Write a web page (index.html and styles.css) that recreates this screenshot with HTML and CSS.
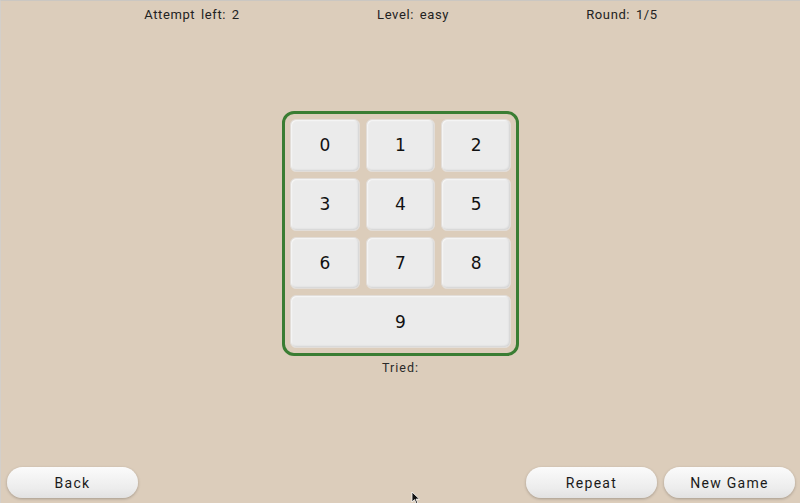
FILE: index.html
```html
<!DOCTYPE html>
<html>
<head>
<meta charset="utf-8">
<link rel="stylesheet" href="styles.css">
</head>
<body>
<div class="app">
  <header class="status">
    <span>Attempt left: 2</span>
    <span>Level: easy</span>
    <span>Round: 1/5</span>
  </header>
  <main class="board">
    <div class="keypad">
      <button class="key">0</button>
      <button class="key">1</button>
      <button class="key">2</button>
      <button class="key">3</button>
      <button class="key">4</button>
      <button class="key">5</button>
      <button class="key">6</button>
      <button class="key">7</button>
      <button class="key">8</button>
      <button class="key key-wide">9</button>
    </div>
    <div class="tried">Tried:</div>
  </main>
  <footer class="actions">
    <button class="pill">Back</button>
    <div class="right">
      <button class="pill">Repeat</button>
      <button class="pill">New Game</button>
    </div>
  </footer>
  <svg class="cursor" width="10" height="14" viewBox="0 0 10 14"><path d="M1 1 L1 11 L3.5 8.6 L5.3 12.6 L6.8 12 L5 8.1 L8.4 8.1 Z" fill="#111" stroke="#fff" stroke-width="0.8"/></svg>
</div>
</body>
</html>
```
FILE: styles.css
```css
* { box-sizing: border-box; }
html, body { margin: 0; padding: 0; }
body {
  width: 800px;
  height: 503px;
  overflow: hidden;
  background: #dccdbb;
  font-family: "Roboto", "DejaVu Sans", sans-serif;
  color: #1e1e1e;
}
.app {
  position: relative;
  width: 800px;
  height: 503px;
  display: flex;
  flex-direction: column;
  border-top: 1px solid #cbc7c2;
  border-left: 1px solid #d3cfca;
}
.status {
  height: 26px;
  display: flex;
  justify-content: space-evenly;
  align-items: center;
  padding: 0 5px 0 6px;
  font-size: 13px;
  letter-spacing: 0.6px;
  word-spacing: 2px;
  color: #222;
}
.board {
  display: flex;
  flex-direction: column;
  align-items: center;
  padding-top: 84px;
}
.keypad {
  width: 237px;
  height: 245px;
  border: 3px solid #3a7d33;
  border-radius: 12px;
  padding: 5px;
  display: grid;
  grid-template-columns: repeat(3, 1fr);
  grid-template-rows: repeat(4, 1fr);
  gap: 6px;
}
.key {
  border: 1px solid #e2ddd8;
  border-radius: 6px;
  background: #ebebeb;
  box-shadow: inset -1px -1px 2px rgba(0,0,0,0.10), inset 1px 1px 1px #f7f7f7;
  font-family: "DejaVu Sans", sans-serif;
  font-size: 17px;
  color: #111;
  padding: 0;
}
.key-wide { grid-column: 1 / span 3; }
.tried {
  margin-top: 5px;
  font-size: 12.5px;
  line-height: 14px;
  color: #2a2a2a;
  letter-spacing: 1px;
}
.actions {
  margin-top: auto;
  display: flex;
  justify-content: space-between;
  padding: 0 5px 5px 6px;
}
.right { display: flex; gap: 7px; }
.pill {
  width: 131px;
  height: 31px;
  border: none;
  border-radius: 16px;
  background: linear-gradient(#fbfbfb, #ececec 70%, #e2e2e2);
  box-shadow: 0 1px 3px rgba(0,0,0,0.25);
  font-family: "Roboto", "DejaVu Sans", sans-serif;
  font-size: 14px;
  letter-spacing: 1.3px;
  color: #1a1a1a;
  padding: 0;
}
.cursor {
  position: absolute;
  left: 410px;
  top: 490px;
}
```
